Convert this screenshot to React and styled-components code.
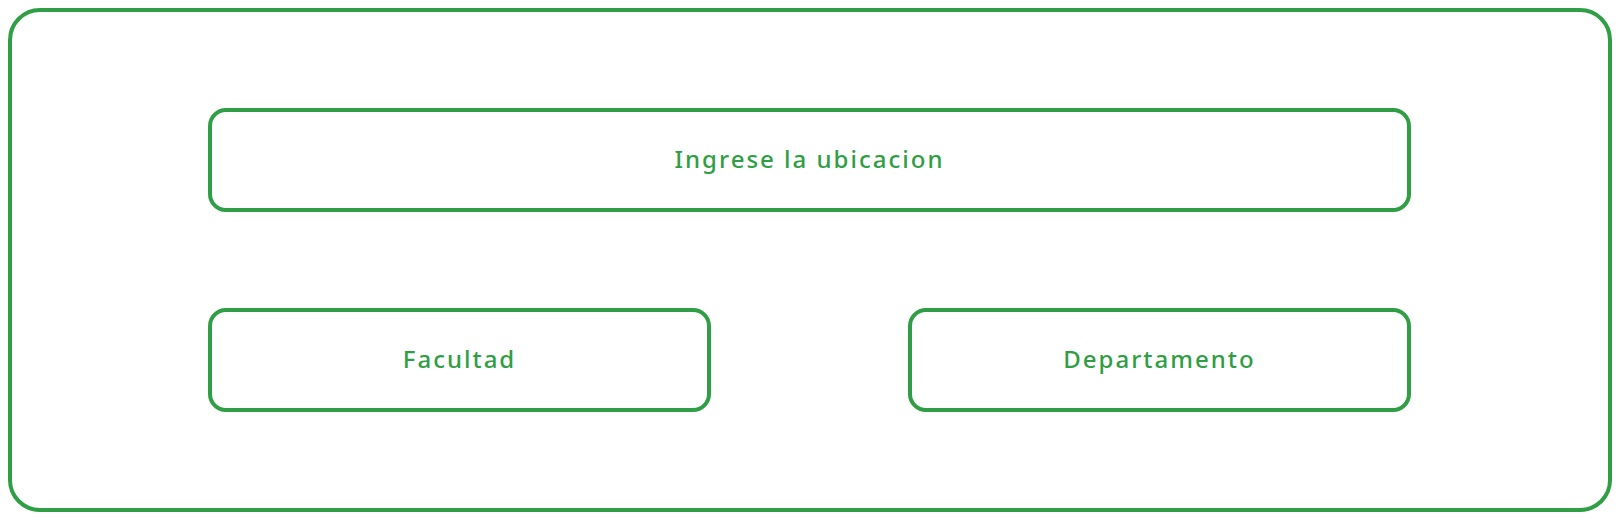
import React from "react";
import styled, { createGlobalStyle } from "styled-components";

const Global = createGlobalStyle`
  html, body { margin: 0; padding: 0; background: #ffffff; }
  body { font-family: "Noto Sans", "Liberation Sans", Arial, sans-serif; }
  * { box-sizing: border-box; }
`;

const GREEN = "#2f9e44";

const Frame = styled.div`
  margin: 8px 0 0 8px;
  width: 1604px;
  height: 504px;
  border: 4px solid ${GREEN};
  border-radius: 32px;
  padding: 96px 197px 96px 196px;
  display: flex;
  flex-direction: column;
  gap: 96px;
`;

const Row = styled.div`
  display: flex;
  justify-content: space-between;
`;

const Field = styled.div`
  width: ${(p) => (p.$wide ? "1203px" : "503px")};
  height: 104px;
  border: 4px solid ${GREEN};
  border-radius: 18px;
  display: flex;
  align-items: center;
  justify-content: center;
  color: ${GREEN};
  font-family: "Noto Sans", "Liberation Sans", Arial, sans-serif;
  font-size: 24px;
  font-weight: 500;
  letter-spacing: 2px;
  padding-bottom: 4px;
`;

export default function App() {
  return (
    <>
      <Global />
      <Frame>
        <Field $wide>Ingrese la ubicacion</Field>
        <Row>
          <Field>Facultad</Field>
          <Field>Departamento</Field>
        </Row>
      </Frame>
    </>
  );
}
